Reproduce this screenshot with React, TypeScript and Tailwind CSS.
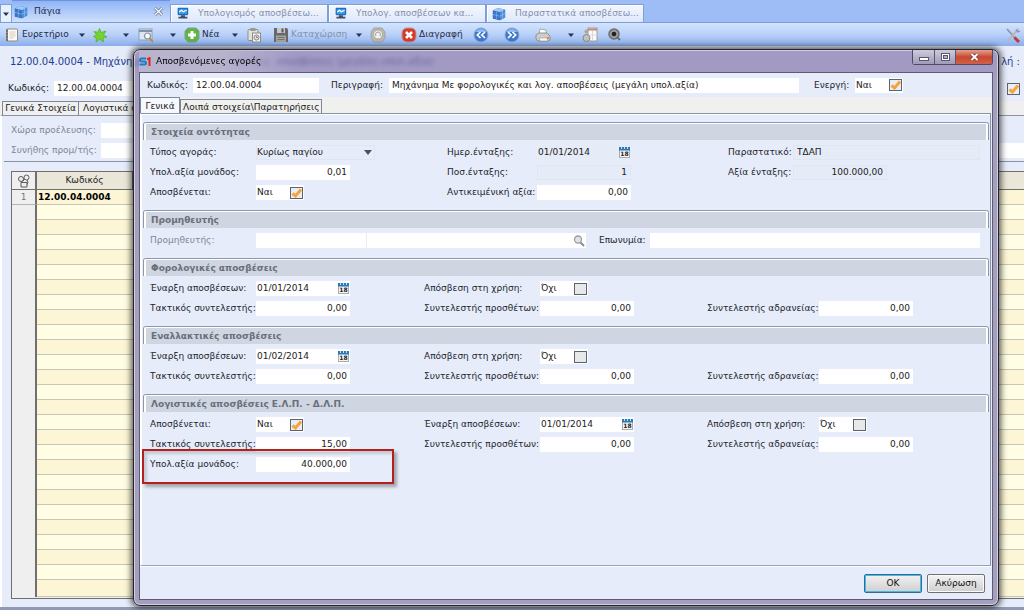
import { useState, type ReactNode } from "react";

/* ---------- icons ---------- */

const svgProps = { width: 16, height: 16, viewBox: "0 0 16 16", "aria-hidden": true } as const;

function CubeIcon() {
  return (
    <svg {...svgProps} className="h-[14px] w-[14px] shrink-0">
      <path d="M1 4 7 1l8 2v9l-6 3-8-2z" fill="#2f6fc4" />
      <path d="M1 4 7 1l8 2-6 3z" fill="#9cc8f4" />
      <path d="M9 6l6-3v9l-6 3z" fill="#4b8ede" />
      <path d="M1 4l8 2v9l-8-2z" fill="#3a74c4" />
      <path d="M5 5v9M1 8.500l8 2 6-3M12 4.500v9M4 2.500l8 2" stroke="#a5cbf3" strokeWidth=".6" fill="none" />
    </svg>
  );
}

function MonitorIcon() {
  return (
    <svg {...svgProps} className="h-[13px] w-[13px] shrink-0">
      <rect x="2" y="1" width="13" height="9" rx="1" fill="#1d6fc0" />
      <rect x="3.500" y="2.500" width="10" height="6" fill="#3f9ae6" />
      <path d="M4 6l3-2 2 2 4-2" stroke="#fff" strokeWidth="1.500" fill="none" />
      <path d="M6 10h5v2h3v2H3v-2h3z" fill="#3d4f68" />
    </svg>
  );
}

function BookIcon() {
  return (
    <svg {...svgProps}>
      <rect x="2" y="1.500" width="12" height="13" rx="1.500" fill="#8d8a84" />
      <rect x="4" y="2.500" width="9" height="11" fill="#fbfaf6" />
      <path d="M5.500 5h6M5.500 7h6M5.500 9h6M5.500 11h4" stroke="#d9cdb9" />
      <path d="M2 4h2M2 7h2M2 10h2M2 13h2" stroke="#5d5a55" />
    </svg>
  );
}

function StarIcon() {
  return (
    <svg {...svgProps}>
      <path
        d="M7.500 1.500l1.800 4 4.700-1.500-2.500 3.800 3.500 2.200-4 .8.5 4-3.800-2.600L4 15l.3-4L1.500 9.500l3-1.700L2 4.500l4 .8z"
        fill="#74d331"
        stroke="#4fae1c"
        strokeWidth=".7"
      />
    </svg>
  );
}

function SearchWindowIcon() {
  return (
    <svg {...svgProps}>
      <rect x="1" y="2" width="13" height="11" fill="#dde6f3" stroke="#8ea0be" />
      <path d="M1 4h13" stroke="#8391a8" strokeWidth="2" />
      <circle cx="9.500" cy="9" r="3" fill="#f8fbff" stroke="#8a8f98" strokeWidth="1.200" />
      <path d="M11.800 11.300 15 15" stroke="#c08a3e" strokeWidth="1.800" />
    </svg>
  );
}

function PlusIcon() {
  return (
    <svg {...svgProps}>
      <path d="M4 1h8l3 3v8l-3 3H4l-3-3V4z" fill="#5cb544" stroke="#8a9c8a" />
      <path d="M8 4v8M4 8h8" stroke="#fff" strokeWidth="3" />
    </svg>
  );
}

function ClipboardIcon() {
  return (
    <svg {...svgProps}>
      <rect x="2" y="2.500" width="10" height="11" rx="1" fill="#e3e1dc" stroke="#8e8c88" />
      <rect x="4.500" y="1" width="5" height="3" fill="#9b9994" />
      <rect x="6.500" y="6" width="8" height="9" fill="#f9f9f9" stroke="#8e8c88" />
      <circle cx="10.500" cy="10.500" r="2.600" fill="#ddd" stroke="#888" />
      <path d="M10.500 9v1.500H12" stroke="#777" strokeWidth=".8" fill="none" />
    </svg>
  );
}

function FloppyIcon() {
  return (
    <svg {...svgProps}>
      <path d="M1 1h13l1 2v12H1z" fill="#68686c" />
      <rect x="4" y="1" width="8" height="5" fill="#c9c9cc" />
      <rect x="8.500" y="1.500" width="2" height="4" fill="#55555a" />
      <rect x="3" y="8.500" width="10" height="6.500" fill="#a6a39e" />
      <path d="M4.500 10.500h7M4.500 12.500h7" stroke="#77746f" />
    </svg>
  );
}

function StampIcon() {
  return (
    <svg {...svgProps}>
      <path d="M4 1h8l3 4v6l-3 4H4l-3-4V5z" fill="#b9b7b2" stroke="#9d9b97" strokeWidth=".8" />
      <circle cx="8" cy="7.500" r="4.500" fill="#f2f2f0" stroke="#a8a6a0" />
      <path d="M6 9a2.500 2.500 0 1 1 4 0" stroke="#98968f" fill="none" />
    </svg>
  );
}

function DeleteIcon() {
  return (
    <svg {...svgProps}>
      <rect x="1" y="1" width="14" height="14" rx="5" fill="#d63a2c" stroke="#b99" />
      <path d="M5 5l6 6M11 5l-6 6" stroke="#fff" strokeWidth="2.600" />
    </svg>
  );
}

function StepIcon({ forward = false }: { forward?: boolean }) {
  return (
    <svg {...svgProps}>
      <circle cx="8" cy="8" r="7" fill="#3d78cf" stroke="#8fa9d2" />
      <path d="M2.500 5a6 5 0 0 1 11 0" fill="#8db8f0" />
      {forward ? (
        <path d="M4 5l3.200 3L4 11M8.500 5l3.200 3-3.200 3" stroke="#fff" strokeWidth="1.700" fill="none" />
      ) : (
        <path d="M7.500 5 4.300 8l3.200 3M12 5 8.800 8l3.200 3" stroke="#fff" strokeWidth="1.700" fill="none" />
      )}
    </svg>
  );
}

function PrinterIcon() {
  return (
    <svg {...svgProps}>
      <path d="M5 2l6 1v5H4z" fill="#fff" stroke="#999" strokeWidth=".8" />
      <path d="M1 8l3-2h8l3 3v4l-2 1H3l-2-2z" fill="#cfcdc9" stroke="#85827e" strokeWidth=".8" />
      <path d="M4 11h8l1 3H5z" fill="#fafafa" stroke="#999" strokeWidth=".6" />
      <rect x="12" y="10" width="2" height="2" fill="#d98f2b" />
    </svg>
  );
}

function ReportIcon() {
  return (
    <svg {...svgProps}>
      <rect x="6" y="1" width="9" height="13" fill="#fafafa" stroke="#a19e99" />
      <path d="M6 2.500h9" stroke="#c08a76" strokeWidth="2" />
      <path d="M10.500 4v10M8 8h7" stroke="#d8d8d8" />
      <circle cx="4.500" cy="11" r="3.500" fill="#c4c1bb" stroke="#8b8882" />
      <circle cx="4.500" cy="4.500" r="2" fill="#a9a7a3" />
    </svg>
  );
}

function ZoomIcon() {
  return (
    <svg {...svgProps}>
      <circle cx="8" cy="7" r="5" fill="#9a9a9a" stroke="#6a6d73" strokeWidth="1.500" />
      <circle cx="8" cy="7" r="2.300" fill="#222" />
      <path d="M11.500 10.500 14 13" stroke="#6a6d73" strokeWidth="2" />
    </svg>
  );
}

function ToolsIcon() {
  return (
    <svg {...svgProps}>
      <path d="M2 2l9 10" stroke="#8c929c" strokeWidth="1.600" />
      <path d="M9.500 10.500 14 15" stroke="#c8372d" strokeWidth="3" />
      <path d="M13.500 2 3 13.500" stroke="#b3b8c1" strokeWidth="2" />
      <path d="M11 2.500 13 5l2-1" stroke="#8c929c" strokeWidth="1.300" fill="none" />
    </svg>
  );
}

function CalendarIcon() {
  return (
    <svg width="11" height="11" viewBox="0 0 11 11" aria-hidden="true">
      <rect x=".5" y="1.500" width="10" height="9" fill="#f4f4f4" stroke="#a9adb3" />
      <rect x="0" y="0" width="11" height="3.500" fill="#2a7ab5" />
      <path d="M2.500 0v2M5.500 0v2M8.500 0v2" stroke="#bfe0f5" />
      <text x="5.500" y="9.300" textAnchor="middle" fontSize="6" fontWeight="bold" fill="#222">
        18
      </text>
    </svg>
  );
}

function MagnifierIcon() {
  return (
    <svg width="12" height="12" viewBox="0 0 12 12" aria-hidden="true">
      <circle cx="5" cy="4.500" r="3.500" fill="#dfe3e8" stroke="#9a9da2" strokeWidth="1.300" />
      <path d="M7.500 7.500 11 11" stroke="#8a8c90" strokeWidth="2" />
    </svg>
  );
}

function GridCornerIcon() {
  return (
    <svg width="14" height="14" viewBox="0 0 14 14" aria-hidden="true" fill="none" stroke="#5b5b5b">
      <circle cx="4" cy="5" r="2.500" />
      <circle cx="9.500" cy="3.500" r="2.500" />
      <path d="M4 8.500h6v4.500H4zM5.500 7.500l2-2M10 6l1 2.500-1 2" />
    </svg>
  );
}

function DownArrow() {
  return (
    <svg width="6" height="4" viewBox="0 0 6 4" aria-hidden="true">
      <path d="M0 .5h6L3 4z" fill="#23344f" />
    </svg>
  );
}

/* ---------- form parts ---------- */

const box = "h-[15px] min-w-0 px-[3px] text-[9px] leading-[15px] outline-none";
const editable = "bg-white text-[#222]";
const locked = "border border-[#dfe5f1] bg-[#e5ebf7] text-[#222]";

function Label({ htmlFor, muted = false, children }: { htmlFor: string; muted?: boolean; children: ReactNode }) {
  return (
    <label htmlFor={htmlFor} className={`whitespace-nowrap leading-[15px] ${muted ? "text-[#7d8799]" : "text-[#23262e]"}`}>
      {children}
    </label>
  );
}

function NumberField({ id, value, readOnly = false }: { id: string; value: string; readOnly?: boolean }) {
  return (
    <input id={id} defaultValue={value} readOnly={readOnly} className={`${box} w-[94px] text-right ${readOnly ? locked : editable}`} />
  );
}

function DateField({ id, value, readOnly = false }: { id: string; value: string; readOnly?: boolean }) {
  return (
    <div className={`flex h-[15px] w-[94px] items-center justify-between ${readOnly ? "bg-[#e5ebf7]" : "bg-white"}`}>
      <input id={id} defaultValue={value} readOnly={readOnly} className="h-[15px] w-[70px] bg-transparent pl-px text-[9px] leading-[15px] text-[#222] outline-none" />
      <button type="button" aria-label="Ημερολόγιο" className="mr-px">
        <CalendarIcon />
      </button>
    </div>
  );
}

function CheckField({ id, initial }: { id: string; initial: boolean }) {
  const [on, setOn] = useState(initial);
  return (
    <div className="flex h-[15px] w-[48px] items-center justify-between bg-white px-px">
      <span className="leading-[15px] text-[#222]">{on ? "Ναι" : "Όχι"}</span>
      <Tick id={id} on={on} onChange={setOn} />
    </div>
  );
}

function Tick({ id, label, on, onChange }: { id: string; label?: string; on: boolean; onChange: (v: boolean) => void }) {
  return (
    <span className="relative flex">
      <input
        id={id}
        type="checkbox"
        aria-label={label}
        checked={on}
        onChange={(e) => onChange(e.target.checked)}
        className="h-[12px] w-[13px] appearance-none border border-[#5c6470] bg-[#e7e8ea] checked:bg-[#e9eef4]"
      />
      {on && (
        <svg width="13" height="12" viewBox="0 0 13 12" aria-hidden="true" className="pointer-events-none absolute inset-0">
          <path d="M2.500 6.500 5.500 9 11 2.500" stroke="#f8a23a" strokeWidth="3" fill="none" />
        </svg>
      )}
    </span>
  );
}

function Section({ title, children }: { title: string; children: ReactNode }) {
  return (
    <section className="pb-[10px]">
      <div className="rounded-t-[3px] border-x border-t border-[#8d97ac]">
        <h2 className="h-[17px] rounded-t-[2px] border-x-2 border-t border-white bg-[#cfd5e1] pl-[5px] text-[9px] font-bold leading-[16px] text-[#69707d]">
          {title}
        </h2>
      </div>
      <div className="pl-[7px] pt-[5px]">{children}</div>
    </section>
  );
}

const entityGrid = "grid grid-cols-[106px_191px_90px_191px_65px_1fr] gap-y-[5px]";
const rateGrid = "grid grid-cols-[106px_168px_116px_167px_112px_1fr] gap-y-[5px]";

function RatesSection({ id, title, start }: { id: string; title: string; start: string }) {
  return (
    <Section title={title}>
      <div className={rateGrid}>
        <Label htmlFor={`${id}-start`}>Έναρξη αποσβέσεων:</Label>
        <DateField id={`${id}-start`} value={start} />
        <Label htmlFor={`${id}-use`}>Απόσβεση στη χρήση:</Label>
        <CheckField id={`${id}-use`} initial={false} />
        <span />
        <span />
        <Label htmlFor={`${id}-reg`}>Τακτικός συντελεστής:</Label>
        <NumberField id={`${id}-reg`} value="0,00" />
        <Label htmlFor={`${id}-add`}>Συντελεστής προσθέτων:</Label>
        <NumberField id={`${id}-add`} value="0,00" />
        <Label htmlFor={`${id}-idle`}>Συντελεστής αδρανείας:</Label>
        <NumberField id={`${id}-idle`} value="0,00" />
      </div>
    </Section>
  );
}

/* ---------- main window ---------- */

function WindowTab({ icon, children }: { icon: ReactNode; children: ReactNode }) {
  return (
    <button
      type="button"
      className="mt-1 flex h-[18px] w-[158px] items-center gap-[9px] border border-b-0 border-[#7f9fdb] bg-linear-to-b from-[#f3f7fe] to-[#dfe9fb] pl-[5px] text-[#8391ad] shadow-[inset_1px_1px_0_#fff]"
    >
      {icon}
      <span className="truncate">{children}</span>
    </button>
  );
}

function Drop({ className = "" }: { className?: string }) {
  return (
    <button type="button" aria-label="Περισσότερα" className={`flex w-4 justify-center ${className}`}>
      <DownArrow />
    </button>
  );
}

function Tool({ icon, label, text, className = "" }: { icon: ReactNode; label?: string; text?: string; className?: string }) {
  return (
    <button type="button" aria-label={text ?? label} className={`flex h-4 shrink-0 items-center gap-[2px] whitespace-nowrap [&>svg]:shrink-0 ${className}`}>
      {icon}
      {text}
    </button>
  );
}

function TopBars() {
  return (
    <header>
      <nav className="flex h-[22px] bg-[#9ebcf5]">
        <button type="button" aria-label="Καρτέλες" className="mt-1 flex h-[18px] w-[12px] items-center justify-center border border-b-0 border-[#7f9fdb] bg-[#e9f0fd]">
          <DownArrow />
        </button>
        <div className="flex h-[22px] w-[158px] items-center border-t border-[#6d93db] bg-linear-to-b from-[#8fb4f6] to-[#cfe0fb] pl-[2px] pr-[7px]">
          <CubeIcon />
          <span className="ml-[6px] flex-1 text-[#1f2c47]">Πάγια</span>
          <button type="button" aria-label="Κλείσιμο">
            <svg width="9" height="9" viewBox="0 0 9 9" aria-hidden="true">
              <path d="M1 1l7 7M8 1 1 8" stroke="#5f708f" strokeWidth="2.800" />
              <path d="M1 1l7 7M8 1 1 8" stroke="#fff" strokeWidth="1.300" />
            </svg>
          </button>
        </div>
        <WindowTab icon={<MonitorIcon />}>Υπολογισμός αποσβέσεω...</WindowTab>
        <WindowTab icon={<MonitorIcon />}>Υπολογ. αποσβέσεων κα...</WindowTab>
        <WindowTab icon={<CubeIcon />}>Παραστατικά αποσβέσεω...</WindowTab>
      </nav>
      <div className="flex h-[24px] items-center border-t border-[#7d9bd6] bg-linear-to-b from-[#d3e4fd] via-[#b9d0f8] to-[#8aaeeb] pl-1 pr-[3px] text-[#1f2c47]">
        <Tool icon={<BookIcon />} text="Ευρετήριο" className="w-[64px]" />
        <Drop className="ml-[6px]" />
        <Tool icon={<StarIcon />} label="Αγαπημένα" className="ml-[2px]" />
        <Drop className="ml-[10px]" />
        <Tool icon={<SearchWindowIcon />} label="Αναζήτηση" className="ml-1" />
        <Drop className="ml-[11px]" />
        <Tool icon={<PlusIcon />} text="Νέα" className="ml-[3px] w-[36px]" />
        <Drop className="ml-[7px]" />
        <Tool icon={<ClipboardIcon />} label="Αντιγραφή" className="ml-[3px]" />
        <Tool icon={<FloppyIcon />} text="Καταχώριση" className="ml-[11px] w-[71px] text-[#8291ae]" />
        <Drop className="ml-[7px]" />
        <Tool icon={<StampIcon />} label="Σφραγίδα" className="ml-[3px]" />
        <Tool icon={<DeleteIcon />} text="Διαγραφή" className="ml-[15px] w-[62px]" />
        <Tool icon={<StepIcon />} label="Προηγούμενο" className="ml-[10px]" />
        <Tool icon={<StepIcon forward />} label="Επόμενο" className="ml-[15px]" />
        <Tool icon={<PrinterIcon />} label="Εκτύπωση" className="ml-[15px]" />
        <Drop className="ml-[12px]" />
        <Tool icon={<ReportIcon />} label="Αναφορά" className="ml-[3px]" />
        <Tool icon={<ZoomIcon />} label="Μεγέθυνση" className="ml-2" />
        <Tool icon={<ToolsIcon />} label="Ρυθμίσεις" className="ml-auto" />
      </div>
    </header>
  );
}

const emptyRows = Array.from({ length: 26 }, (_, i) => i);

function AssetGrid() {
  return (
    <div className="ml-[9px] mt-[9px] flex-1 border-b border-l border-t border-[#6f6f6f] bg-[#efefef]">
      <table className="w-full table-fixed border-separate border-spacing-0">
        <thead>
          <tr className="h-[18px] bg-[#eae6d8]">
            <th className="w-[25px] border-b border-r-2 border-[#6f6f6f] bg-[#efefef] p-0">
              <span className="flex justify-center">
                <GridCornerIcon />
              </span>
            </th>
            <th className="w-[96px] border-b border-r border-[#6f6f6f] p-0 font-normal leading-[17px] text-[#222]">Κωδικός</th>
            <th className="border-b border-[#6f6f6f] p-0" />
          </tr>
        </thead>
        <tbody>
          <tr className="h-[15px] bg-[#fdf6d6]">
            <td className="border-b border-r-2 border-b-[#b5b5b5] border-r-[#6f6f6f] bg-[#efefef] p-0 text-center leading-[14px] text-[#777]">1</td>
            <td className="border-b border-[#c9c6b4] p-0 pl-px font-bold leading-[14px] text-black">12.00.04.0004</td>
            <td className="border-b border-[#c9c6b4] p-0" />
          </tr>
          {emptyRows.map((i) => (
            <tr key={i} className="h-[15px] last:h-[17px] odd:bg-[#fdf6d6] even:bg-[#fffee4]">
              <td className="border-r-2 border-[#6f6f6f] bg-[#efefef] p-0" />
              <td className="border-b border-[#c9c6b4] p-0" />
              <td className="border-b border-[#c9c6b4] p-0" />
            </tr>
          ))}
        </tbody>
      </table>
    </div>
  );
}

function MainForm() {
  const [on, setOn] = useState(true);
  return (
    <main className="flex flex-1 flex-col">
      <div className="flex h-[30px] items-center justify-between pl-[10px] pr-1 text-[10px] text-[#1c3d94]">
        <h1>12.00.04.0004 - Μηχάνημα Με φορολογικές και λογ. αποσβέσεις (μεγάλη υπολ.αξία)</h1>
        <span>λή :</span>
      </div>
      <div className="flex h-[25px] items-center justify-between pl-2 pr-1">
        <div className="flex">
          <div className="w-[46px]">
            <Label htmlFor="asset-code">Κωδικός:</Label>
          </div>
          <input id="asset-code" defaultValue="12.00.04.0004" className={`${box} ${editable} w-[126px]`} />
        </div>
        <Tick id="asset-active" label="Ενεργή" on={on} onChange={setOn} />
      </div>
      <div className="flex h-[14px] bg-[#f0f0f0] pl-[2px]">
        <button type="button" className="w-[77px] whitespace-nowrap border border-b-0 border-[#7e8796] bg-[#f0f0f0] leading-[13px] text-[#222]">
          Γενικά Στοιχεία
        </button>
        <button type="button" className="whitespace-nowrap border border-b-0 border-l-0 border-[#7e8796] bg-[#f0f0f0] px-1 leading-[13px] text-[#222]">
          Λογιστικά σ
        </button>
      </div>
      <div className="flex flex-1 flex-col border-l-2 border-t border-l-white border-t-[#8a93a5] pb-[8px]">
        <div className="grid grid-cols-[90px_1fr] gap-y-[5px] pl-[9px] pt-[7px]">
          <Label htmlFor="country" muted>
            Χώρα προέλευσης:
          </Label>
          <input id="country" className={`${box} ${editable} w-[200px]`} />
          <Label htmlFor="vendor" muted>
            Συνήθης προμ/τής:
          </Label>
          <input id="vendor" className={`${box} ${editable}`} />
        </div>
        <div className="ml-[2px] mt-[3px] border-t border-[#8a93a5]" />
        <AssetGrid />
      </div>
      <div className="h-[3px] bg-[#8e9ab3]" />
    </main>
  );
}

/* ---------- dialog ---------- */

function TitleBar() {
  return (
    <div className="flex h-[22px] items-start justify-between">
      <div className="flex h-[22px] items-center gap-[5px] bg-linear-to-r from-[#b9b4ce] via-[#b9b4ce] to-[#b9b4ce]/0 pr-8 text-black">
        <svg width="12" height="9" viewBox="0 0 12 9" aria-hidden="true">
          <path d="M7 1.500H2.500Q1 1.500 1 3t1.500 1.500h3Q7 4.500 7 6T5.500 7.500H.500" stroke="#1c7fc4" strokeWidth="2" fill="none" />
          <path d="M8 2.500 10.500 1v8" stroke="#e2231a" strokeWidth="2" fill="none" />
        </svg>
        Αποσβενόμενες αγορές
      </div>
      <div className="flex h-[15px] rounded-b-[3px] border border-t-0 border-[#4f4b66]">
        <button type="button" aria-label="Ελαχιστοποίηση" className="flex w-[22px] items-end justify-center border-r border-[#5b5773] bg-linear-to-b from-[#cfcbdd] to-[#a09ab8] pb-[3px]">
          <span className="h-[4px] w-[10px] border border-[#5a5670] bg-white" />
        </button>
        <button type="button" aria-label="Μεγιστοποίηση" className="flex w-[21px] items-center justify-center border-r border-[#5b5773] bg-linear-to-b from-[#cfcbdd] to-[#a09ab8]">
          <span className="flex h-[8px] w-[9px] items-center justify-center border border-[#5a5670] bg-white">
            <span className="h-[4px] w-[5px] border border-[#5a5670] bg-[#b4afc8]" />
          </span>
        </button>
        <button type="button" aria-label="Κλείσιμο παραθύρου" className="flex w-[36px] items-center justify-center rounded-br-[2px] bg-linear-to-b from-[#e0a090] via-[#c8472f] to-[#d0604a]">
          <svg width="9" height="8" viewBox="0 0 9 8" aria-hidden="true">
            <path d="M1.500 1l6 6M7.500 1l-6 6" stroke="#6d2b26" strokeWidth="3.200" />
            <path d="M1.500 1l6 6M7.500 1l-6 6" stroke="#fff" strokeWidth="2" />
          </svg>
        </button>
      </div>
    </div>
  );
}

function Dialog() {
  return (
    <div
      role="dialog"
      aria-label="Αποσβενόμενες αγορές"
      className="absolute bottom-1 left-[133px] right-[25px] top-[49px] flex flex-col rounded-[7px] border border-[#24222e] bg-[linear-gradient(to_bottom,rgba(134,120,173,0.7)_24px,#a49ebf_24px)] px-[5px] pb-[5px] shadow-[0_0_6px_2px_rgba(0,0,0,0.65),inset_0_0_0_1px_rgba(255,255,255,0.5)] backdrop-blur-[2px]"
    >
      <TitleBar />
      <div className="flex flex-1 flex-col border border-[#5d5a74] bg-[#e6ecf9]">
        <div className="flex h-[24px] items-center pl-[7px] pr-[89px]">
          <div className="w-[46px]">
            <Label htmlFor="code">Κωδικός:</Label>
          </div>
          <input id="code" defaultValue="12.00.04.0004" className={`${box} ${editable} w-[126px]`} />
          <div className="ml-[12px] w-[58px]">
            <Label htmlFor="descr">Περιγραφή:</Label>
          </div>
          <input id="descr" defaultValue="Μηχάνημα Με φορολογικές και λογ. αποσβέσεις (μεγάλη υπολ.αξία)" className={`${box} ${editable} flex-1`} />
          <div className="ml-[15px] w-[41px]">
            <Label htmlFor="active">Ενεργή:</Label>
          </div>
          <CheckField id="active" initial />
        </div>
        <div className="flex h-[16px] items-end bg-[#f0f0ef] text-[#222]">
          <button type="button" className="-mb-px h-[17px] w-[40px] border border-b-0 border-[#7e8796] bg-[#f6f8fd] leading-[16px]">
            Γενικά
          </button>
          <button type="button" className="h-[14px] whitespace-nowrap border border-b-0 border-[#7e8796] bg-[#f0f0ef] px-[2px] leading-[14px]">
            Λοιπά στοιχεία\Παρατηρήσεις
          </button>
        </div>
        <div className="mr-px flex-1 border-b border-l border-r border-t border-b-[#9aa2b2] border-l-white border-r-[#8a93a5] border-t-[#8a93a5]">
          <div className="h-full border-l border-t border-white px-px pt-[7px]">
            <Section title="Στοιχεία οντότητας">
              <div className={entityGrid}>
                <Label htmlFor="type">Τύπος αγοράς:</Label>
                <div className="relative flex h-[15px] w-[119px] items-center">
                  <select id="type" className="h-[15px] w-full appearance-none border border-[#dfe5f1] bg-[#e6ecf9] leading-[13px] text-[#222] outline-none">
                    <option>Κυρίως παγίου</option>
                  </select>
                  <svg width="8" height="5" viewBox="0 0 8 5" aria-hidden="true" className="pointer-events-none absolute right-[3px] top-[5px]">
                    <path d="M0 0h8L4 5z" fill="#4c5260" />
                  </svg>
                </div>
                <Label htmlFor="entry-date">Ημερ.ένταξης:</Label>
                <DateField id="entry-date" value="01/01/2014" readOnly />
                <Label htmlFor="document">Παραστατικό:</Label>
                <input id="document" defaultValue="ΤΔΑΠ" readOnly className={`${box} ${locked} mr-[9px]`} />

                <Label htmlFor="unit-value">Υπολ.αξία μονάδος:</Label>
                <NumberField id="unit-value" value="0,01" />
                <Label htmlFor="entry-qty">Ποσ.ένταξης:</Label>
                <NumberField id="entry-qty" value="1" readOnly />
                <Label htmlFor="entry-value">Αξία ένταξης:</Label>
                <NumberField id="entry-value" value="100.000,00" readOnly />

                <Label htmlFor="depreciated">Αποσβένεται:</Label>
                <CheckField id="depreciated" initial />
                <Label htmlFor="objective">Αντικειμένική αξία:</Label>
                <NumberField id="objective" value="0,00" />
              </div>
            </Section>

            <Section title="Προμηθευτής">
              <div className="flex items-center pr-[9px]">
                <div className="w-[106px]">
                  <Label htmlFor="supplier" muted>
                    Προμηθευτής:
                  </Label>
                </div>
                <input id="supplier" className={`${box} ${editable} w-[110px]`} />
                <div className="ml-px flex h-[15px] w-[219px] items-center bg-white">
                  <input aria-label="Όνομα προμηθευτή" className={`${box} flex-1`} />
                  <button type="button" aria-label="Αναζήτηση προμηθευτή" className="mr-px">
                    <MagnifierIcon />
                  </button>
                </div>
                <div className="ml-[13px] w-[51px]">
                  <Label htmlFor="name">Επωνυμία:</Label>
                </div>
                <input id="name" className={`${box} ${editable} flex-1`} />
              </div>
            </Section>

            <RatesSection id="tax" title="Φορολογικές αποσβέσεις" start="01/01/2014" />
            <RatesSection id="alt" title="Εναλλακτικές αποσβέσεις" start="01/02/2014" />

            <Section title="Λογιστικές αποσβέσεις Ε.Λ.Π. - Δ.Λ.Π.">
              <div className={rateGrid}>
                <Label htmlFor="acc-dep">Αποσβένεται:</Label>
                <CheckField id="acc-dep" initial />
                <Label htmlFor="acc-start">Έναρξη αποσβέσεων:</Label>
                <DateField id="acc-start" value="01/01/2014" />
                <Label htmlFor="acc-use">Απόσβεση στη χρήση:</Label>
                <CheckField id="acc-use" initial={false} />
                <Label htmlFor="acc-reg">Τακτικός συντελεστής:</Label>
                <NumberField id="acc-reg" value="15,00" />
                <Label htmlFor="acc-add">Συντελεστής προσθέτων:</Label>
                <NumberField id="acc-add" value="0,00" />
                <Label htmlFor="acc-idle">Συντελεστής αδρανείας:</Label>
                <NumberField id="acc-idle" value="0,00" />
              </div>
              <div className="relative mt-[5px] flex">
                <div className="w-[106px]">
                  <Label htmlFor="acc-unit">Υπολ.αξία μονάδος:</Label>
                </div>
                <NumberField id="acc-unit" value="40.000,00" />
                <div className="pointer-events-none absolute -left-2 -top-2 h-[35px] w-[252px] border-2 border-[#b3201f] shadow-[3px_3px_3px_rgba(0,0,0,0.3),inset_3px_3px_3px_rgba(0,0,0,0.15)]" />
              </div>
            </Section>
          </div>
        </div>
        <div className="flex h-[33px] justify-end gap-[5px] border-t border-white pr-[7px] pt-[7px]">
          <button type="button" className="h-[19px] w-[58px] rounded-[2px] border border-[#2c6f93] bg-linear-to-b from-[#f2f2f2] to-[#cfcfcf] text-[#111] shadow-[inset_0_0_0_1px_#49b9e6]">
            OK
          </button>
          <button type="button" className="h-[19px] w-[58px] rounded-[2px] border border-[#707070] bg-linear-to-b from-[#f4f4f4] to-[#cfcfcf] text-[#111] shadow-[inset_0_0_0_1px_#fafafa]">
            Ακύρωση
          </button>
        </div>
      </div>
    </div>
  );
}

export default function App() {
  return (
    <div className="relative flex min-h-screen flex-col overflow-hidden bg-[#e6ecf9] font-['DejaVu_Sans',sans-serif] text-[9px] leading-[15px]">
      <TopBars />
      <MainForm />
      <Dialog />
    </div>
  );
}
